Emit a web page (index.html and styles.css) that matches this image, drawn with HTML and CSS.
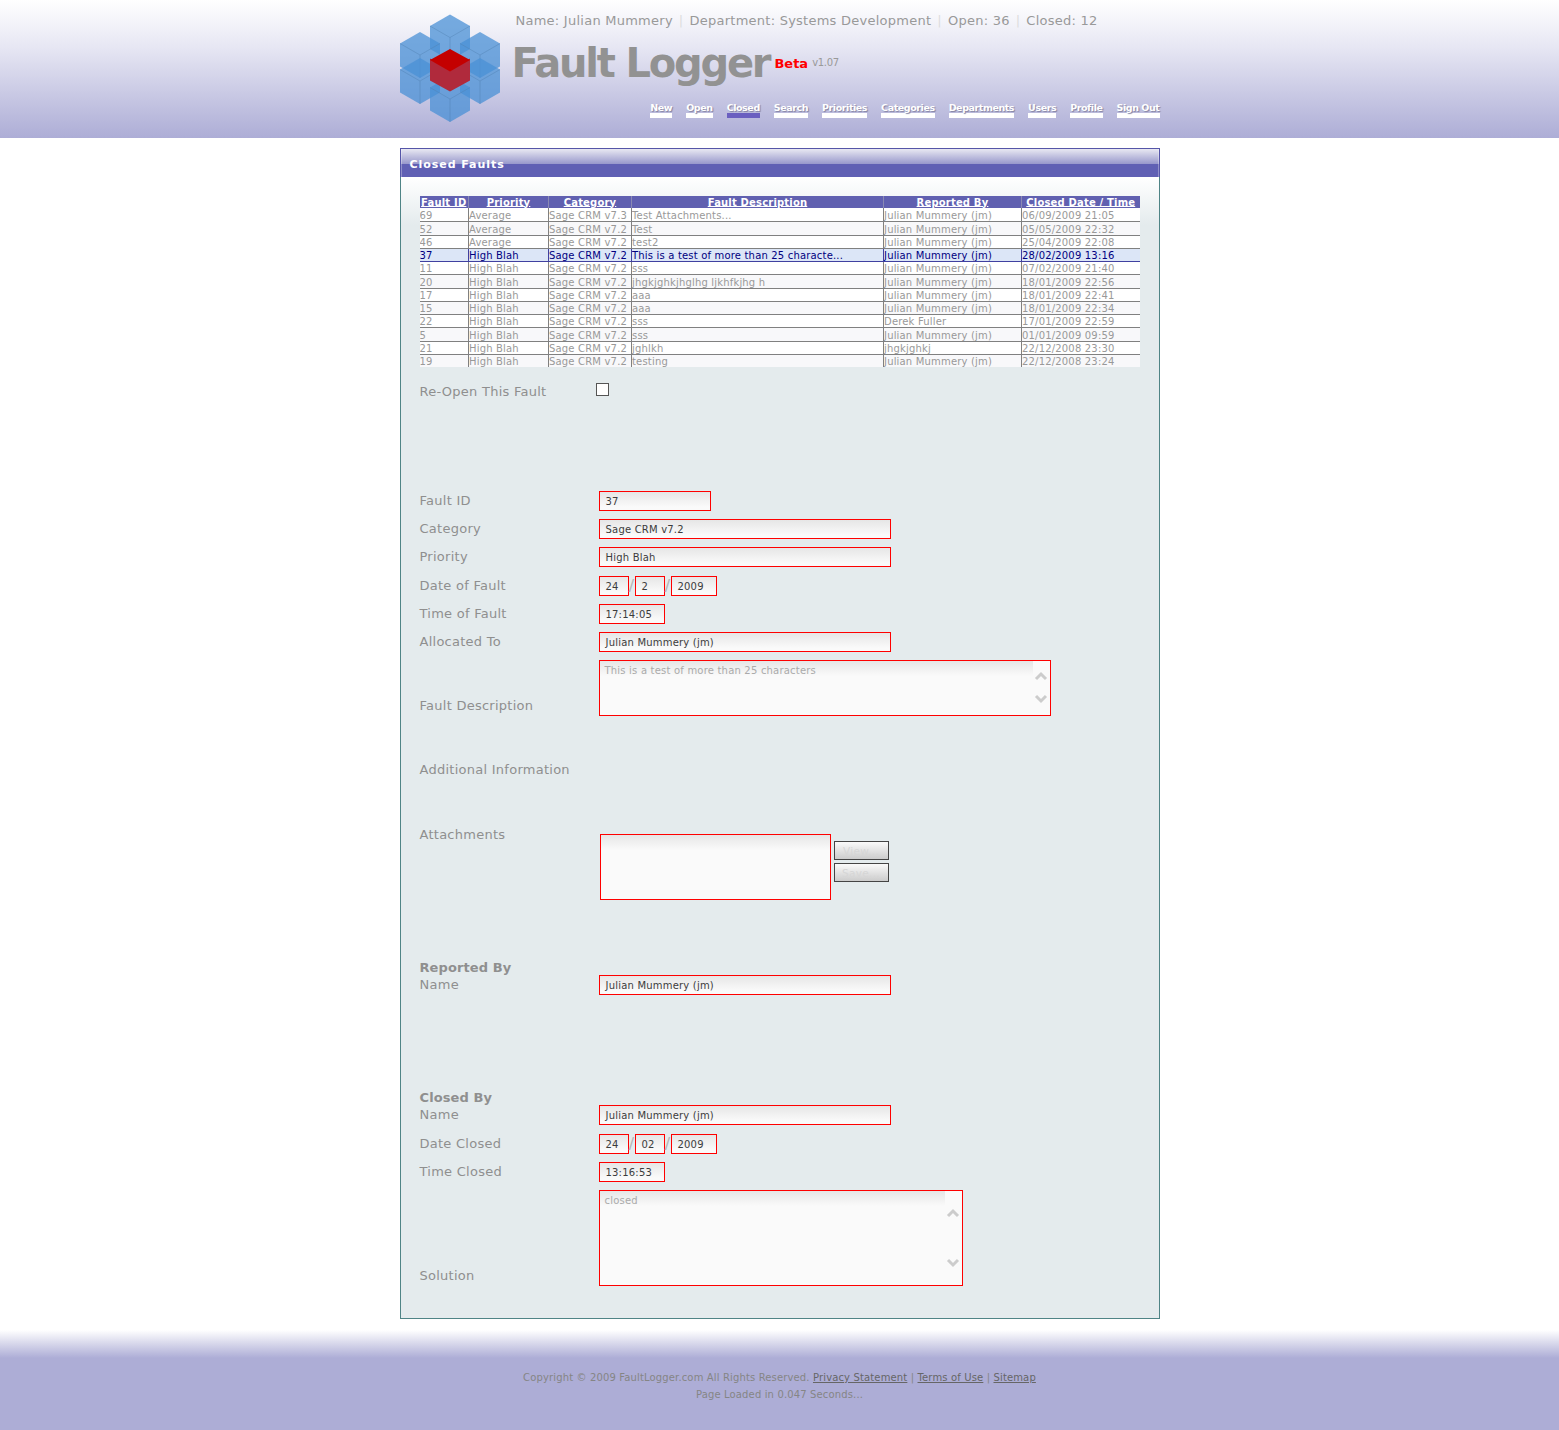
FILE: index.html
```html
<!DOCTYPE html>
<html lang="en">
<head>
    <meta charset="UTF-8">
    <title>Fault Logger - Closed Faults</title>
    <link rel="stylesheet" href="styles.css">
</head>
<body>
    <!-- Header -->
    <div id="header">
        <div class="header-inner">
            <svg class="logo" width="100" height="108" viewBox="400 14 100 108">
                <defs>
                    <g id="cube">
                        <polygon class="cube-body" points="0,-23 20,-11.5 20,11.5 0,23 -20,11.5 -20,-11.5"/>
                        <polyline class="cube-edge" points="-20,-11.5 0,0 20,-11.5"/>
                        <line class="cube-edge" x1="0" y1="0" x2="0" y2="23"/>
                    </g>
                </defs>
                <use href="#cube" x="450" y="37.5"/>
                <use href="#cube" x="420" y="55"/>
                <use href="#cube" x="480" y="55"/>
                <use href="#cube" x="420" y="81"/>
                <use href="#cube" x="480" y="81"/>
                <use href="#cube" x="450" y="99"/>
                <polygon class="red-side" points="430,58.5 450,70 470,58.5 470,80.5 450,91.5 430,80.5"/>
                <polygon class="red-top" points="450,49 470,60 450,71.5 430,60"/>
            </svg>
            <div class="header-right">
                <div class="user-stats">
                    <span>Name: Julian Mummery</span><i>|</i><span>Department: Systems Development</span><i>|</i><span>Open: 36</span><i>|</i><span>Closed: 12</span>
                </div>
                <div class="brand">
                    <span class="brand-name">Fault Logger</span>
                    <span class="brand-beta">Beta</span>
                    <span class="brand-version">v1.07</span>
                </div>
                <ul class="nav">
                    <li><a href="#">New</a></li>
                    <li><a href="#">Open</a></li>
                    <li><a href="#" class="active">Closed</a></li>
                    <li><a href="#">Search</a></li>
                    <li><a href="#">Priorities</a></li>
                    <li><a href="#">Categories</a></li>
                    <li><a href="#">Departments</a></li>
                    <li><a href="#">Users</a></li>
                    <li><a href="#">Profile</a></li>
                    <li><a href="#">Sign Out</a></li>
                </ul>
            </div>
        </div>
    </div>

    <!-- Main panel -->
    <div id="panel">
        <div class="panel-title"><span>Closed Faults</span></div>
        <div class="panel-body">
            <table class="fault-table">
                <colgroup>
                    <col class="col-id"><col class="col-priority"><col class="col-category">
                    <col class="col-desc"><col class="col-by"><col class="col-date">
                </colgroup>
                <thead>
                    <tr>
                        <th><a href="#">Fault ID</a></th>
                        <th><a href="#">Priority</a></th>
                        <th><a href="#">Category</a></th>
                        <th><a href="#">Fault Description</a></th>
                        <th><a href="#">Reported By</a></th>
                        <th><a href="#">Closed Date / Time</a></th>
                    </tr>
                </thead>
                <tbody>
                    <tr><td>69</td><td>Average</td><td>Sage CRM v7.3</td><td>Test Attachments...</td><td>Julian Mummery (jm)</td><td>06/09/2009 21:05</td></tr>
                    <tr class="tall alt"><td>52</td><td>Average</td><td>Sage CRM v7.2</td><td>Test</td><td>Julian Mummery (jm)</td><td>05/05/2009 22:32</td></tr>
                    <tr><td>46</td><td>Average</td><td>Sage CRM v7.2</td><td>test2</td><td>Julian Mummery (jm)</td><td>25/04/2009 22:08</td></tr>
                    <tr class="selected"><td>37</td><td>High Blah</td><td>Sage CRM v7.2</td><td>This is a test of more than 25 characte...</td><td>Julian Mummery (jm)</td><td>28/02/2009 13:16</td></tr>
                    <tr><td>11</td><td>High Blah</td><td>Sage CRM v7.2</td><td>sss</td><td>Julian Mummery (jm)</td><td>07/02/2009 21:40</td></tr>
                    <tr class="tall alt"><td>20</td><td>High Blah</td><td>Sage CRM v7.2</td><td>jhgkjghkjhglhg ljkhfkjhg h</td><td>Julian Mummery (jm)</td><td>18/01/2009 22:56</td></tr>
                    <tr><td>17</td><td>High Blah</td><td>Sage CRM v7.2</td><td>aaa</td><td>Julian Mummery (jm)</td><td>18/01/2009 22:41</td></tr>
                    <tr class="alt"><td>15</td><td>High Blah</td><td>Sage CRM v7.2</td><td>aaa</td><td>Julian Mummery (jm)</td><td>18/01/2009 22:34</td></tr>
                    <tr><td>22</td><td>High Blah</td><td>Sage CRM v7.2</td><td>sss</td><td>Derek Fuller</td><td>17/01/2009 22:59</td></tr>
                    <tr class="tall alt"><td>5</td><td>High Blah</td><td>Sage CRM v7.2</td><td>sss</td><td>Julian Mummery (jm)</td><td>01/01/2009 09:59</td></tr>
                    <tr><td>21</td><td>High Blah</td><td>Sage CRM v7.2</td><td>jghlkh</td><td>jhgkjghkj</td><td>22/12/2008 23:30</td></tr>
                    <tr class="alt"><td>19</td><td>High Blah</td><td>Sage CRM v7.2</td><td>testing</td><td>Julian Mummery (jm)</td><td>22/12/2008 23:24</td></tr>
                </tbody>
            </table>

            <form class="fault-form">
                <div class="row reopen-row">
                    <label>Re-Open This Fault</label>
                    <input type="checkbox" class="check">
                </div>

                <div class="row fault-id-row">
                    <label>Fault ID</label>
                    <div class="field w-id">37</div>
                </div>
                <div class="row">
                    <label>Category</label>
                    <div class="field w-wide">Sage CRM v7.2</div>
                </div>
                <div class="row">
                    <label>Priority</label>
                    <div class="field w-wide">High Blah</div>
                </div>
                <div class="row row-date">
                    <label>Date of Fault</label>
                    <div class="date-group">
                        <div class="field w-day">24</div><span class="slash">/</span><div class="field w-day">2</div><span class="slash">/</span><div class="field w-year">2009</div>
                    </div>
                </div>
                <div class="row">
                    <label>Time of Fault</label>
                    <div class="field w-time">17:14:05</div>
                </div>
                <div class="row">
                    <label>Allocated To</label>
                    <div class="field w-wide">Julian Mummery (jm)</div>
                </div>
                <div class="row">
                    <label>Fault Description</label>
                    <div class="field area area-desc">
                        <div class="area-text">This is a test of more than 25 characters</div>
                        <div class="scroll">
                            <svg width="14" height="10" viewBox="0 0 14 10"><path d="M2 8 L7 3 L12 8"/></svg>
                            <svg width="14" height="10" viewBox="0 0 14 10"><path d="M2 2 L7 7 L12 2"/></svg>
                        </div>
                    </div>
                </div>
                <div class="row additional-row">
                    <label>Additional Information</label>
                </div>
                <div class="row attachments-row">
                    <label>Attachments</label>
                    <div class="attach-group">
                        <div class="field attach-list"></div>
                        <div class="attach-buttons">
                            <button type="button" disabled>View...</button>
                            <button type="button" disabled>Save...</button>
                        </div>
                    </div>
                </div>
                <div class="row reported-row">
                    <label><b>Reported By</b>Name</label>
                    <div class="field w-wide">Julian Mummery (jm)</div>
                </div>
                <div class="row closed-row">
                    <label><b>Closed By</b>Name</label>
                    <div class="field w-wide">Julian Mummery (jm)</div>
                </div>
                <div class="row row-date">
                    <label>Date Closed</label>
                    <div class="date-group">
                        <div class="field w-day">24</div><span class="slash">/</span><div class="field w-day">02</div><span class="slash">/</span><div class="field w-year">2009</div>
                    </div>
                </div>
                <div class="row">
                    <label>Time Closed</label>
                    <div class="field w-time">13:16:53</div>
                </div>
                <div class="row">
                    <label>Solution</label>
                    <div class="field area area-solution">
                        <div class="area-text">closed</div>
                        <div class="scroll">
                            <svg width="14" height="10" viewBox="0 0 14 10"><path d="M2 8 L7 3 L12 8"/></svg>
                            <svg width="14" height="10" viewBox="0 0 14 10"><path d="M2 2 L7 7 L12 2"/></svg>
                        </div>
                    </div>
                </div>
            </form>
        </div>
    </div>

    <!-- Footer -->
    <div id="footer">
        <p>Copyright © 2009 FaultLogger.com All Rights Reserved. <a href="#">Privacy Statement</a> | <a href="#">Terms of Use</a> | <a href="#">Sitemap</a></p>
        <p>Page Loaded in 0.047 Seconds...</p>
    </div>
</body>
</html>
```
FILE: styles.css
```css
/* Global Styling */
html, body {
    margin: 0;
    padding: 0;
}

body {
    font-family: 'DejaVu Sans', Verdana, sans-serif;
    background: #fff;
    height: 1430px;
    overflow: hidden;
}

/* Header */
#header {
    height: 138px;
    background: linear-gradient(180deg, #ffffff 0%, #e6e6f3 35%, #adadd6 100%);
}

.header-inner {
    width: 760px;
    margin: 0 auto;
    display: flex;
}

.logo {
    margin-top: 14px;
    flex: none;
}

.cube-body {
    fill: #4a90d6;
    fill-opacity: 0.75;
}

.cube-edge {
    fill: none;
    stroke: #4f7fb0;
    stroke-width: 0.7;
    stroke-opacity: 0.6;
}

.red-top {
    fill: #c40000;
}

.red-side {
    fill: #b02a3c;
}

.header-right {
    flex: 1;
    padding-left: 13px;
}

.user-stats {
    height: 20px;
    margin-top: 11px;
    padding-left: 3px;
    font-size: 13px;
    line-height: 20px;
    letter-spacing: 0.25px;
    color: #999;
    white-space: nowrap;
}

.user-stats i {
    font-style: normal;
    color: #ddd;
    margin: 0 6px;
}

.brand {
    display: flex;
    align-items: center;
    height: 46px;
    margin-top: 9px;
    white-space: nowrap;
}

.brand-name {
    margin-left: -1px;
    font-size: 40px;
    font-weight: bold;
    line-height: 46px;
    color: #929292;
    letter-spacing: -2.2px;
}

.brand-beta {
    margin-left: 5px;
    font-size: 13px;
    font-weight: bold;
    color: #f00;
}

.brand-version {
    margin: 0 0 2px 4px;
    font-size: 10px;
    letter-spacing: -0.3px;
    color: #999;
}

.nav {
    list-style: none;
    margin: 16px 0 0;
    padding: 0;
    display: flex;
    justify-content: flex-end;
    gap: 14px;
}

.nav a {
    display: block;
    height: 11px;
    font-size: 9.5px;
    font-weight: bold;
    line-height: 11px;
    color: #fff;
    letter-spacing: -0.42px;
    text-decoration: none;
    text-shadow: 1px 1px 1px #8080a0;
    border-bottom: 5px solid #fff;
}

.nav a.active {
    border-bottom-color: #6a5fc0;
}

/* Panel */
#panel {
    width: 760px;
    box-sizing: border-box;
    margin: 10px auto 0;
}

.panel-title {
    height: 29px;
    box-sizing: border-box;
    border: 1px solid #5555a8;
    border-bottom: 0;
    box-shadow: inset 1px 0 rgba(255, 255, 255, 0.3), inset -1px 0 rgba(255, 255, 255, 0.3);
    background: linear-gradient(180deg, #e8e8f2 0%, #9a9acd 52%, #6060b4 54%, #6060b4 100%);
}

.panel-title span {
    display: block;
    padding: 9px 0 0 9px;
    font-size: 11px;
    font-weight: bold;
    line-height: 14px;
    letter-spacing: 0.95px;
    color: #fff;
}

.panel-body {
    height: 1142px;
    box-sizing: border-box;
    padding: 19px 19px 0;
    border: 1px solid #4f8486;
    border-top: 0;
    background: linear-gradient(180deg, #ffffff 0, #e4ebed 48px);
}

/* Fault table */
.fault-table {
    width: 720px;
    table-layout: fixed;
    border-collapse: collapse;
    font-size: 10px;
    line-height: 10px;
    letter-spacing: 0.18px;
}

.col-id { width: 49px; }
.col-priority { width: 80px; }
.col-category { width: 83px; }
.col-desc { width: 252px; }
.col-by { width: 138px; }
.col-date { width: 118px; }

.fault-table th {
    height: 10px;
    padding: 2px 0 0;
    background: #6060b0;
    border-left: 1px solid #8a8ab4;
    text-align: center;
    white-space: nowrap;
}

.fault-table th:first-child,
.fault-table td:first-child {
    border-left: 0;
}

.fault-table th a {
    color: #fff;
    text-underline-offset: 0;
}

.fault-table td {
    height: 10px;
    padding: 2px 0 0;
    background: #fff;
    color: #999;
    border-top: 1px solid #808080;
    border-left: 1px solid #808080;
    white-space: nowrap;
    overflow: hidden;
}

.fault-table tbody tr:first-child td {
    border-top: 0;
    height: 11px;
}

.fault-table tr.alt td {
    background: #f8f8fa;
}

.fault-table tr.tall td {
    height: 11px;
}

.fault-table tr.selected td {
    background: #dce6f7;
    color: #000080;
    border-left-color: #4040a0;
}

.fault-table tr.selected + tr td {
    border-top-color: #4040a0;
}

/* Form */
.row {
    display: grid;
    grid-template-columns: 179px 1fr;
    align-items: end;
    margin-top: 8px;
    min-height: 20px;
}

.row label {
    display: block;
    padding-bottom: 2px;
    font-size: 13px;
    line-height: 16px;
    letter-spacing: 0.26px;
    color: #8f8f8f;
}

.row label b {
    display: block;
    margin-bottom: 1px;
    line-height: 17px;
    letter-spacing: 0.1px;
}

.reopen-row { margin-top: 15px; }
.fault-id-row { margin-top: 89px; }
.row-date { margin-top: 9px; }
.additional-row { margin-top: 44px; }
.attachments-row { margin-top: 46px; align-items: start; }
.attachments-row label { padding-top: 1px; }
.reported-row { margin-top: 59px; }
.closed-row { margin-top: 94px; }

.check {
    appearance: none;
    -webkit-appearance: none;
    width: 13px;
    height: 13px;
    box-sizing: border-box;
    margin: 1px 0 0 -3px;
    align-self: start;
    background: #fff;
    border: 1px solid #555;
}

.field {
    height: 20px;
    box-sizing: border-box;
    padding-left: 6px;
    border: 1px solid #f00;
    background: linear-gradient(180deg, #e6e6e6 0, #fafafa 15px);
    font-size: 10px;
    line-height: 19px;
    letter-spacing: 0.2px;
    color: #3c3c3c;
    white-space: nowrap;
}

.w-id { width: 112px; }
.w-wide { width: 292px; }
.w-day { width: 30px; }
.w-year { width: 46px; }
.w-time { width: 66px; }

.date-group {
    display: flex;
    align-items: center;
}

.slash {
    width: 6px;
    font-size: 16px;
    line-height: 18px;
    color: #b4b4b4;
    text-align: center;
}

.area {
    display: flex;
    padding: 0;
    color: #aaa;
}

.area-desc {
    width: 452px;
    height: 56px;
}

.area-solution {
    width: 364px;
    height: 96px;
}

.area-text {
    flex: 1;
    padding: 1px 0 0 5px;
    line-height: 18px;
}

.scroll {
    flex: none;
    width: 17px;
    display: flex;
    flex-direction: column;
    align-items: center;
    justify-content: space-between;
    box-sizing: border-box;
    background: #fafafa;
}

.area-desc .scroll { padding: 10px 0 11px; }
.area-solution .scroll { padding: 17px 0 17px; }

.scroll path {
    fill: none;
    stroke: #ccc;
    stroke-width: 3;
}

.attach-group {
    display: flex;
    margin-top: 8px;
    margin-left: 1px;
}

.attach-list {
    width: 231px;
    height: 66px;
}

.attach-buttons {
    display: flex;
    flex-direction: column;
    gap: 3px;
    margin: 7px 0 0 3px;
}

.attach-buttons button {
    width: 55px;
    height: 19px;
    padding: 0;
    border: 1px solid #444;
    background: linear-gradient(180deg, #fafafa, #cccccc);
    font-family: 'DejaVu Sans', Verdana, sans-serif;
    font-size: 10.5px;
    letter-spacing: 0.3px;
    color: #d6d6d6;
}

/* Footer */
#footer {
    height: 100px;
    margin-top: 11px;
    box-sizing: border-box;
    padding-top: 41px;
    background: linear-gradient(180deg, #ffffff 0, #adadd6 28px);
    text-align: center;
    font-size: 10px;
    letter-spacing: 0.14px;
    color: #858585;
}

#footer p {
    margin: 0 0 4px;
    line-height: 13px;
}

#footer a {
    color: #666;
}
```
